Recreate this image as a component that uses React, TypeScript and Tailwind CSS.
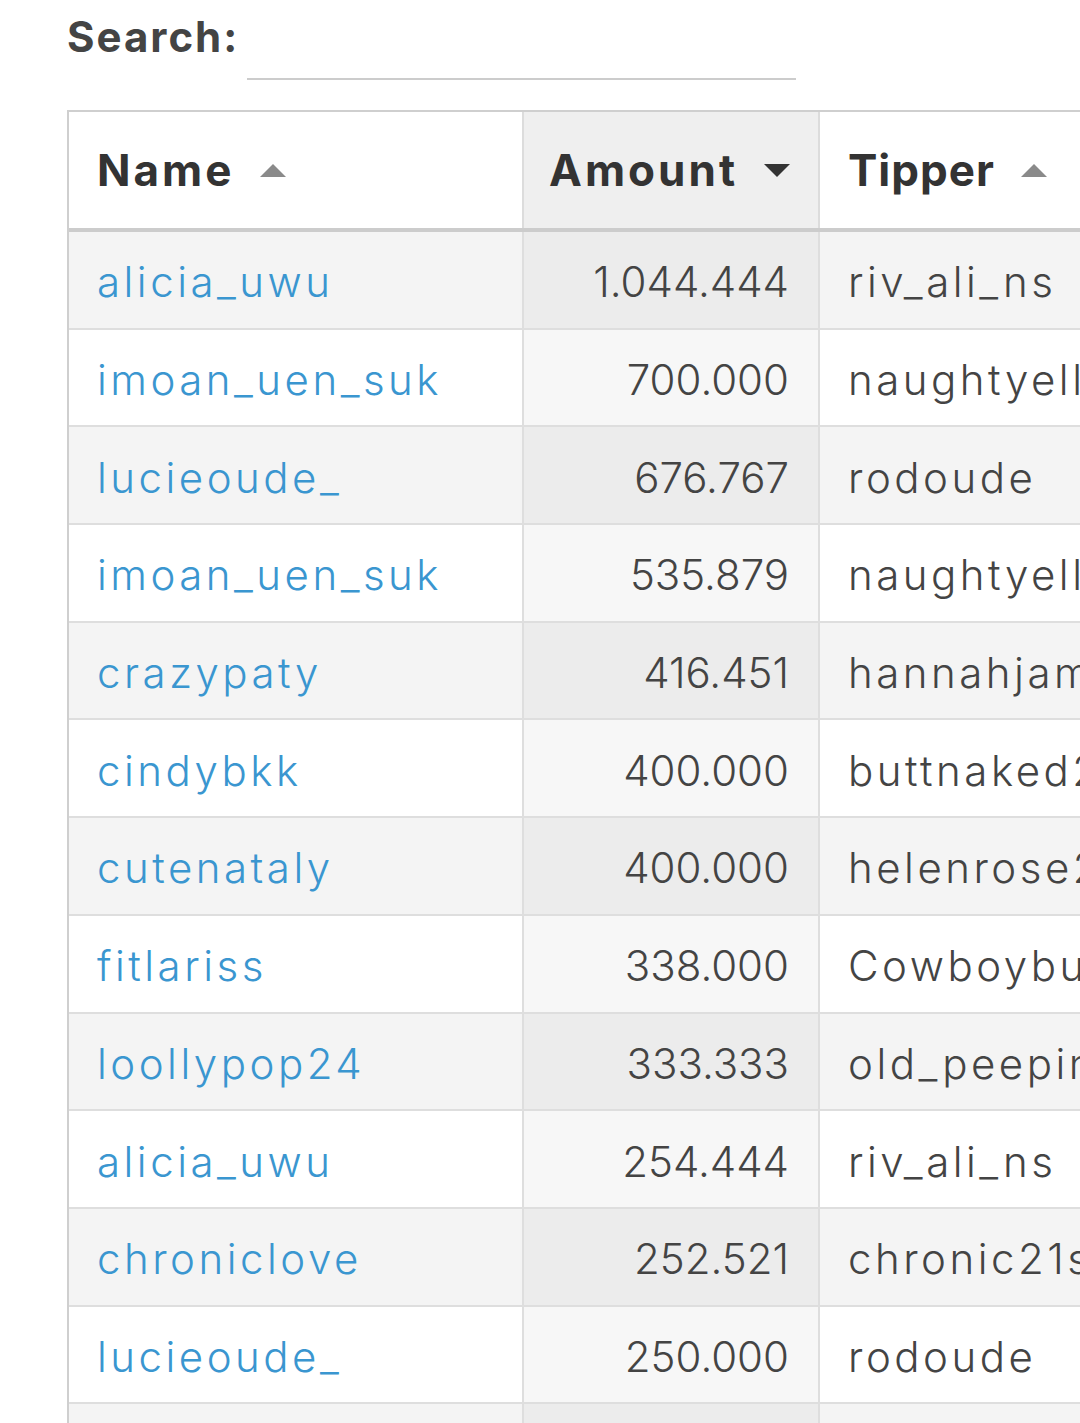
import React from 'react';

type Row = { name: string; amount: string; tipper: string };

const rows: Row[] = [
  { name: 'alicia_uwu', amount: '1.044.444', tipper: 'riv_ali_ns' },
  { name: 'imoan_uen_suk', amount: '700.000', tipper: 'naughtyellow' },
  { name: 'lucieoude_', amount: '676.767', tipper: 'rodoude' },
  { name: 'imoan_uen_suk', amount: '535.879', tipper: 'naughtyellow' },
  { name: 'crazypaty', amount: '416.451', tipper: 'hannahjames' },
  { name: 'cindybkk', amount: '400.000', tipper: 'buttnaked2' },
  { name: 'cutenataly', amount: '400.000', tipper: 'helenrose2' },
  { name: 'fitlariss', amount: '338.000', tipper: 'Cowboybutt' },
  { name: 'loollypop24', amount: '333.333', tipper: 'old_peeping' },
  { name: 'alicia_uwu', amount: '254.444', tipper: 'riv_ali_ns' },
  { name: 'chroniclove', amount: '252.521', tipper: 'chronic21st' },
  { name: 'lucieoude_', amount: '250.000', tipper: 'rodoude' },
  { name: 'sweetsugar', amount: '250.000', tipper: 'sugardaddy' },
];

const font = { fontFamily: 'Inter, "Noto Sans", sans-serif' };

const SortArrow: React.FC<{ dir: 'up' | 'down'; active?: boolean }> = ({ dir, active }) => (
  <svg width="26" height="13" viewBox="0 0 26 13" className="ml-[26px] shrink-0">
    <polygon
      points={dir === 'up' ? '13,0 26,13 0,13' : '0,0 26,0 13,13'}
      fill={active ? '#333333' : '#8a8a8a'}
    />
  </svg>
);

const App: React.FC = () => {
  return (
    <div className="w-[1080px] h-[1423px] overflow-hidden bg-white text-[#444]" style={font}>
      <div className="flex items-start pl-[67px] pt-[9px]">
        <label className="text-[42px] font-bold text-[#444] leading-[56px] tracking-[2px]">Search:</label>
        <div className="ml-[8px] mt-[69px] w-[549px] border-b-2 border-[#cccccc]" />
      </div>

      <div className="ml-[67px] mt-[30px] w-[1200px] border-l-2 border-t-2 border-[#cfcfcf]">
        <div className="grid grid-cols-[455px_296px_449px] h-[120px] border-b-4 border-[#cccccc]">
          <div className="flex items-center pl-[28px] border-r-2 border-[#dcdcdc] bg-white">
            <span className="text-[44px] font-bold text-[#333] tracking-[3px]">Name</span>
            <SortArrow dir="up" />
          </div>
          <div className="flex items-center justify-end pr-[28px] border-r-2 border-[#dcdcdc] bg-[#efefef]">
            <span className="text-[44px] font-bold text-[#333] tracking-[3px]">Amount</span>
            <SortArrow dir="down" active />
          </div>
          <div className="flex items-center pl-[28px] bg-white">
            <span className="text-[44px] font-bold text-[#333] tracking-[1px]">Tipper</span>
            <SortArrow dir="up" />
          </div>
        </div>

        {rows.map((r, i) => {
          const odd = i % 2 === 0;
          return (
            <div
              key={i}
              className={`grid grid-cols-[455px_296px_449px] h-[97.7px] border-b-2 border-[#dedede] ${
                odd ? 'bg-[#f4f4f4]' : 'bg-white'
              }`}
            >
              <div className="flex items-center pl-[28px] pt-[4px] border-r-2 border-[#dedede] whitespace-nowrap overflow-hidden">
                <a className="text-[42px] font-light text-[#3a96d0] tracking-[3.5px]">{r.name}</a>
              </div>
              <div
                className={`flex items-center justify-end pr-[29px] pt-[4px] border-r-2 border-[#dedede] ${
                  odd ? 'bg-[#ececec]' : 'bg-[#f7f7f7]'
                }`}
              >
                <span className="text-[42px] font-light text-[#444]">{r.amount}</span>
              </div>
              <div className="flex items-center pl-[28px] pt-[4px] whitespace-nowrap overflow-hidden">
                <span className="text-[42px] font-light text-[#444] tracking-[3.5px]">{r.tipper}</span>
              </div>
            </div>
          );
        })}
      </div>
    </div>
  );
};

export default App;
